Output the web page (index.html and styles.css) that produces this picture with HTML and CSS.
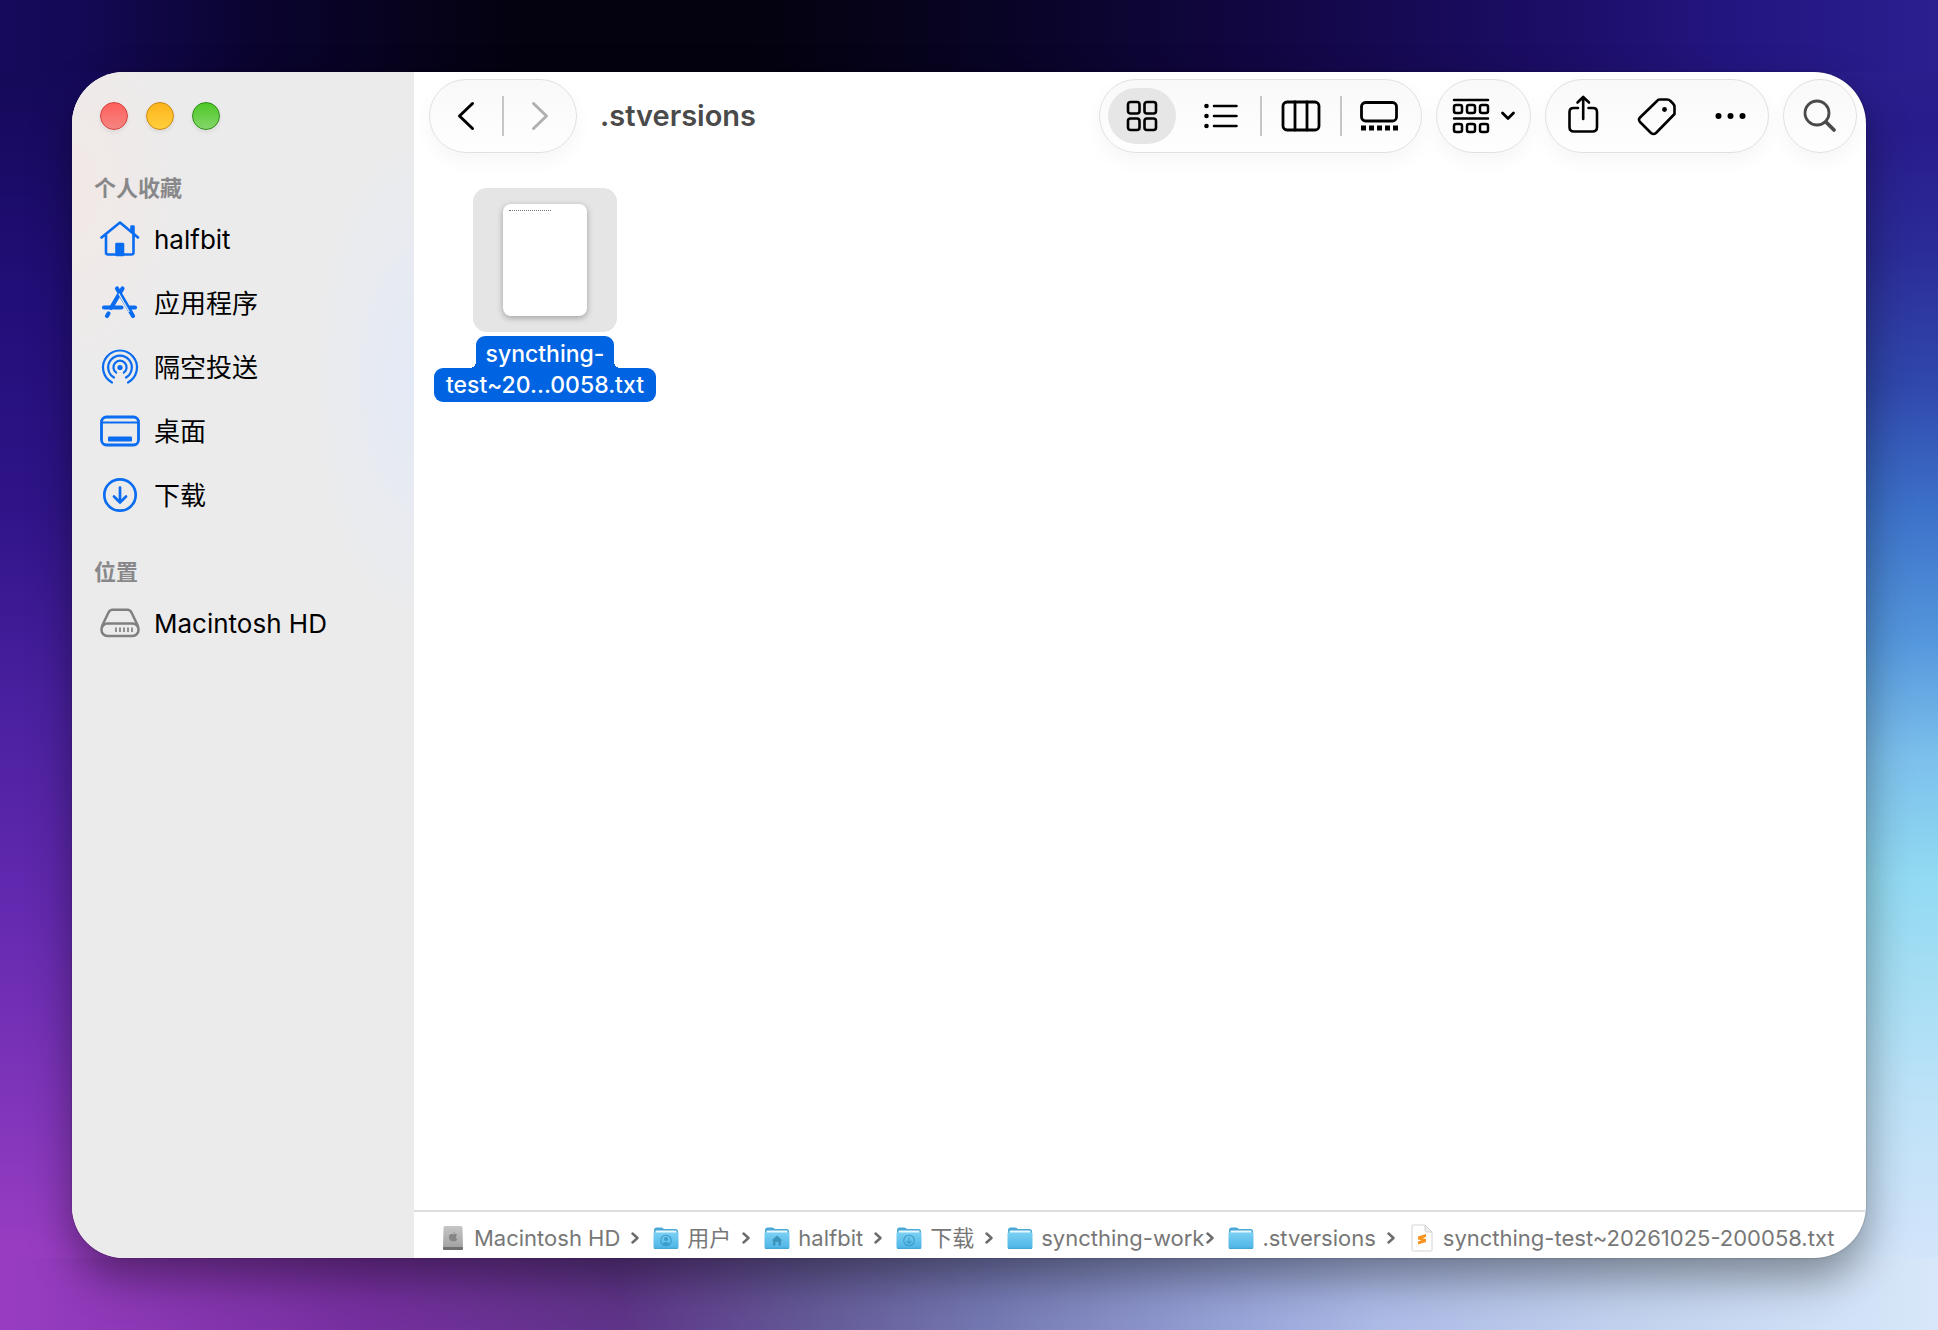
FILE: index.html
```html
<!DOCTYPE html>
<html lang="zh-CN">
<head>
<meta charset="utf-8">
<meta name="viewport" content="width=device-width, initial-scale=1">
<title>.stversions</title>
<link rel="stylesheet" href="styles.css">
</head>
<body>
<svg class="defs" aria-hidden="true">
  <defs>
    <linearGradient id="folder-front" x1="0" y1="0" x2="0" y2="1"><stop offset="0" stop-color="#7bd0f3"/><stop offset="1" stop-color="#4db4e6"/></linearGradient>
    <linearGradient id="drive-body" x1="0" y1="0" x2="0" y2="1"><stop offset="0" stop-color="#c6c6c6"/><stop offset="1" stop-color="#a2a2a2"/></linearGradient>
    <symbol id="folder" viewBox="0 0 26 24">
      <path d="M1 4.5Q1 1.5 3.5 1.5H8Q9.300 1.500 10.300 2.500Q11 3 12 3H22.500Q25 3 25 5.500V12H1Z" fill="#4aa9d6"/>
      <rect x="2.500" y="4.500" width="21" height="6" rx="1" fill="#e8f7fd"/>
      <path d="M.5 7.500Q.5 6.500 1.500 6.500H24.500Q25.500 6.500 25.500 7.500V21Q25.500 23 23.500 23H2.500Q.5 23 .5 21Z" fill="url(#folder-front)"/>
      <path d="M1 22.300H25" stroke="#45a3d0"/>
    </symbol>
    <symbol id="sep" viewBox="0 0 8 12"><path d="M1.500 1.500 6.500 6 1.500 10.500" fill="none" stroke="#6b6b6b" stroke-width="2.400" stroke-linecap="round" stroke-linejoin="round"/></symbol>
  </defs>
</svg>
<div class="window">
  <aside class="sidebar">
    <div class="lights">
      <button class="light red" aria-label="关闭"></button>
      <button class="light yellow" aria-label="最小化"></button>
      <button class="light green" aria-label="缩放"></button>
    </div>
    <nav>
      <h2>个人收藏</h2>
      <ul>
        <li><a href="#home">
          <svg width="40" height="36" viewBox="0 0 40 36" fill="none" stroke="#0a6cf0" stroke-width="2.600" stroke-linecap="round" stroke-linejoin="round"><path d="M1.500 16.500 20 1.500 38 16.500M6 14V31.500Q6 33.500 8 33.500H31.500Q33.500 33.500 33.500 31.500V14"/><path d="M31.500 10V5.500H33.500V12.500"/><path d="M16.500 34V23H23V34Z" fill="#0a6cf0"/></svg>
          <span>halfbit</span></a></li>
        <li><a href="#apps">
          <svg width="40" height="36" viewBox="0 0 40 36" fill="none" stroke="#0a6cf0" stroke-width="4.200" stroke-linecap="round"><path d="M17 3.500 33 31M22.500 3.500 11 23M4 22.500H21.500M29.500 22.500H35M8.500 28.500 7 31"/><path d="M19 9 29 26.500" stroke="#ebecec" stroke-width="1.300"/></svg>
          <span class="zh">应用程序</span></a></li>
        <li><a href="#airdrop">
          <svg width="40" height="36" viewBox="0 0 40 36" fill="none" stroke="#0a6cf0" stroke-width="2.200" stroke-linecap="round"><path d="M12 33.500A17 17 0 1 1 28 33.500M14 28.500A11.800 11.800 0 1 1 26 28.500M16.200 23.700A6.600 6.600 0 1 1 23.800 23.700"/><circle cx="20" cy="18.500" r="2.600" fill="#0a6cf0" stroke="none"/></svg>
          <span class="zh">隔空投送</span></a></li>
        <li><a href="#desktop">
          <svg width="40" height="36" viewBox="0 0 40 36" fill="none" stroke="#0a6cf0" stroke-width="2.800"><rect x="1.500" y="4" width="37" height="28" rx="5"/><path d="M2 9.500H38" stroke-width="2"/><rect x="8" y="23.500" width="24" height="5" rx="1" fill="#0a6cf0" stroke="none"/></svg>
          <span class="zh">桌面</span></a></li>
        <li><a href="#downloads">
          <svg width="40" height="36" viewBox="0 0 40 36" fill="none" stroke="#0a6cf0" stroke-width="2.700" stroke-linecap="round" stroke-linejoin="round"><circle cx="20" cy="18" r="15.700"/><path d="M20 10.500V25M14 19.500 20 25.500 26 19.500"/></svg>
          <span class="zh">下载</span></a></li>
      </ul>
      <h2>位置</h2>
      <ul>
        <li><a href="#hd">
          <svg width="40" height="36" viewBox="0 0 40 36" fill="none" stroke="#808082" stroke-width="2.500" stroke-linejoin="round"><path d="M2 21 8.500 7.500Q9.800 4.700 12.500 4.700H27.500Q30.200 4.700 31.500 7.500L38 21"/><rect x="1.500" y="18.500" width="37" height="12.500" rx="6"/><path d="M16 22.500V27M20 22.500V27M24 22.500V27M28 22.500V27M32 22.500V27" stroke-width="1.700"/></svg>
          <span>Macintosh HD</span></a></li>
      </ul>
    </nav>
  </aside>
  <main class="content">
    <header class="toolbar">
      <div class="pill nav-pill">
        <button class="tool" aria-label="后退"><svg width="18" height="30" viewBox="0 0 18 30"><path d="M15.500 2.500 2.500 15 15.500 27.500" stroke-width="3"/></svg></button>
        <i class="divider"></i>
        <button class="tool" aria-label="前进" disabled><svg width="18" height="30" viewBox="0 0 18 30"><path d="M2.500 2.500 15.500 15 2.500 27.500" stroke-width="3"/></svg></button>
      </div>
      <h1>.stversions</h1>
      <div class="pill view-pill">
        <button class="tool selected" aria-label="图标"><svg width="32" height="32" viewBox="0 0 32 32" stroke-width="2.600"><rect x="2" y="2" width="11.500" height="11.500" rx="2.500"/><rect x="18.500" y="2" width="11.500" height="11.500" rx="2.500"/><rect x="2" y="18.500" width="11.500" height="11.500" rx="2.500"/><rect x="18.500" y="18.500" width="11.500" height="11.500" rx="2.500"/></svg></button>
        <button class="tool" aria-label="列表"><svg width="34" height="26" viewBox="0 0 34 26" stroke-width="2.600"><path d="M10 3H32.500M10 13H32.500M10 23H32.500"/><g fill="#000" stroke="none"><circle cx="2.500" cy="3" r="2.300"/><circle cx="2.500" cy="13" r="2.300"/><circle cx="2.500" cy="23" r="2.300"/></g></svg></button>
        <i class="divider"></i>
        <button class="tool" aria-label="分栏"><svg width="40" height="32" viewBox="0 0 40 32" stroke-width="2.800"><rect x="2" y="2" width="36" height="28" rx="4"/><path d="M14 2V30M26 2V30"/></svg></button>
        <i class="divider"></i>
        <button class="tool last" aria-label="画廊"><svg width="40" height="32" viewBox="0 0 40 32" stroke-width="2.800"><rect x="2.500" y="2.500" width="35" height="18.500" rx="4"/><path d="M2 28H7M10 28H15M18 28H23M26 28H31M34 28H39" stroke-width="5" stroke-linecap="butt"/></svg></button>
      </div>
      <button class="pill group-pill" aria-label="分组">
        <svg width="38" height="36" viewBox="0 0 38 36" stroke-width="2.500"><path d="M2 2H36M2 20.500H36"/><rect x="2" y="7" width="8" height="8" rx="2"/><rect x="15" y="7" width="8" height="8" rx="2"/><rect x="28" y="7" width="8" height="8" rx="2"/><rect x="2" y="26" width="8" height="8" rx="2"/><rect x="15" y="26" width="8" height="8" rx="2"/><rect x="28" y="26" width="8" height="8" rx="2"/></svg>
        <svg width="16" height="10" viewBox="0 0 16 10" stroke-width="2.800"><path d="M2.500 2 8 7.500 13.500 2"/></svg>
      </button>
      <div class="pill action-pill">
        <button class="tool" aria-label="共享"><svg width="32" height="44" viewBox="0 0 32 44" stroke-width="2.600"><path d="M11 14H6.500Q2.500 14 2.500 18V33Q2.500 37.500 7 37.500H25.500Q30 37.500 30 33V18Q30 14 26 14H21.500M16.200 25V3M10.500 8.500 16.200 3 22 8.500"/></svg></button>
        <button class="tool" aria-label="标签"><svg width="40" height="40" viewBox="0 0 40 40" stroke-width="2.600"><path d="M22.500 3.500H30Q32 3.500 33.500 5L36 7.500Q37.500 9 37.500 11V18L19 37Q16.500 39 14 37L3 26Q1 23.500 3 21.500L20 5Q21 3.500 22.500 3.500Z"/><circle cx="27.500" cy="13.500" r="2.400" fill="#000" stroke="none"/></svg></button>
        <button class="tool" aria-label="更多"><svg width="32" height="8" viewBox="0 0 32 8"><g fill="#000" stroke="none"><circle cx="3.500" cy="4" r="3"/><circle cx="15.500" cy="4" r="3"/><circle cx="27.500" cy="4" r="3"/></g></svg></button>
      </div>
      <button class="pill search-pill" aria-label="搜索"><svg width="34" height="34" viewBox="0 0 34 34"><circle cx="14" cy="14" r="12" stroke="#4a4a4a" stroke-width="2.800"/><path d="M23 23 31 31" stroke="#4a4a4a" stroke-width="3.800"/></svg></button>
    </header>
    <section class="files">
      <a class="file" href="#file">
        <span class="thumb"><span class="page"><i class="scribble"></i></span></span>
        <span class="name"><span class="line first">syncthing-</span><span class="line second">test~20...0058.txt</span></span>
      </a>
    </section>
    <footer class="pathbar">
      <a class="crumb" href="#hd"><svg width="26" height="26" viewBox="-2 0 26 26"><path d="M1.500 2.500Q1.500 1 3 1H19Q20.500 1 20.500 2.500L21 23H1Z" fill="url(#drive-body)"/><rect x="1" y="22" width="20" height="3" rx="1" fill="#707070"/><path d="M11 8.500Q12 6.500 13 6.500 13 8 11 8.500M11 9.500C13 8.200 14.500 9 15 10 13.300 11 13.700 13.500 15.200 14 14.200 16.500 13 17 11.200 16 9 17 7.500 15.500 7 13 6.500 9.500 9 8.300 11 9.500Z" fill="#858585"/></svg><span>Macintosh HD</span></a>
      <svg class="sep"><use href="#sep"/></svg>
      <a class="crumb" href="#users"><svg width="26" height="24" viewBox="0 0 26 24"><use href="#folder"/><g fill="none" stroke="#3c9cc8" stroke-width="1.100"><circle cx="13" cy="14.500" r="5.300"/></g><circle cx="13" cy="13" r="2" fill="#3c9cc8"/><path d="M9.500 17.500Q13 14.500 16.500 17.500 13 21 9.500 17.500Z" fill="#3c9cc8"/></svg><span>用户</span></a>
      <svg class="sep"><use href="#sep"/></svg>
      <a class="crumb" href="#home"><svg width="26" height="24" viewBox="0 0 26 24"><use href="#folder"/><path d="M7.500 14.500 13 9.500 18.500 14.500H17V19.500H14.500V16H11.500V19.500H9V14.500Z" fill="#3c94bd"/></svg><span>halfbit</span></a>
      <svg class="sep"><use href="#sep"/></svg>
      <a class="crumb" href="#downloads"><svg width="26" height="24" viewBox="0 0 26 24"><use href="#folder"/><g fill="none" stroke="#3c9cc8" stroke-width="1.100"><circle cx="13" cy="14.500" r="5.300"/><path d="M13 11.500V17.500M10.500 15 13 17.500 15.500 15"/></g></svg><span>下载</span></a>
      <svg class="sep"><use href="#sep"/></svg>
      <a class="crumb cut" href="#work"><svg width="26" height="24" viewBox="0 0 26 24"><use href="#folder"/></svg><span>syncthing-work</span></a>
      <svg class="sep"><use href="#sep"/></svg>
      <a class="crumb" href="#versions"><svg width="26" height="24" viewBox="0 0 26 24"><use href="#folder"/></svg><span>.stversions</span></a>
      <svg class="sep"><use href="#sep"/></svg>
      <a class="crumb" href="#file"><svg width="26" height="28" viewBox="-2 0 26 28"><path d="M1 2Q1 1 2 1H14L21 8V26Q21 27 20 27H2Q1 27 1 26Z" fill="#fff" stroke="#d5d5d5"/><path d="M14 1V6.500Q14 8 15.500 8H21Z" fill="#eee" stroke="#d0d0d0"/><path d="M7 12.500 15 10V13L11.500 14.200 15 15V18L7 20.500V17.500L10.500 16.300 7 15.500Z" fill="#f7931e"/></svg><span>syncthing-test~20261025-200058.txt</span></a>
    </footer>
  </main>
</div>
</body>
</html>
```
FILE: styles.css
```css
* { box-sizing: border-box; }

body {
  margin: 0;
  min-height: 100vh;
  padding: 72px;
  display: flex;
  font-family: Inter, "Noto Sans CJK SC", sans-serif;
  color: #000;
  background-color: #2d1282;
  background-image:
    linear-gradient(90deg, #150a5c 0%, #140956 4%, #0a0430 13%, #04020f 27%, #04020f 39%, #080424 51%, #110640 64%, #1c0d66 80%, #231682 90%, #2a1f8f 100%),
    linear-gradient(90deg, #983dc2 0%, #8c38b6 7%, #752f9e 19%, #5e3488 32%, #645a98 42%, #7478b2 51%, #98a4d8 64%, #acbae6 71%, #c2d2ee 84%, #d8e8fa 100%),
    linear-gradient(180deg, #150a5c 0%, #140958 5%, #220e78 22%, #2f1488 38%, #4a20a0 53%, #6329b0 68%, #8035ba 83%, #983dc2 94%),
    linear-gradient(180deg, #2a208c 0%, #281c8c 10%, #2b2c98 19%, #3048ac 29%, #3c70c8 38%, #5496dc 48%, #7cc0ec 57%, #92daf2 66%, #a6def4 74%, #bee2f8 83%, #d0e4fa 93%, #d8e8fa 100%);
  background-repeat: no-repeat;
  background-position: left top, left bottom, left top, right top;
  background-size: 100% 72px, 100% 72px, 50% 100%, 50% 100%;
}

.defs { position: absolute; width: 0; height: 0; }

a { color: inherit; text-decoration: none; }
button { font: inherit; border: 0; padding: 0; background: none; }
svg { flex: none; display: block; }

.window {
  flex: 1;
  display: flex;
  min-width: 0;
  border-radius: 52px;
  overflow: hidden;
  background: #fff;
  box-shadow: 0 20px 44px rgba(0, 0, 0, .4), 0 0 2px rgba(0, 0, 0, .3);
}

/* Sidebar */
.sidebar {
  flex: none;
  width: 342px;
  padding: 30px 22px;
  background:
    radial-gradient(ellipse 100px 240px at 100% 26%, #e4eaf6, transparent),
    radial-gradient(ellipse 120px 200px at 0 10%, #f2e9e6, transparent),
    #ebebec;
}
.lights { display: flex; gap: 18px; padding-left: 6px; }
.light {
  width: 28px;
  height: 28px;
  border-radius: 50%;
  border: 1px solid;
  box-shadow: 0 2px 4px rgba(0, 0, 0, .08);
}
.red { background: linear-gradient(#ff605c, #f58580); border-color: #d0423f; }
.yellow { background: linear-gradient(#fdb41c, #ffcf3c); border-color: #c98712; }
.green { background: linear-gradient(#4dc926, #84d66a); border-color: #2c8a14; }

.sidebar h2 {
  margin: 42px 0 3px;
  font-size: 22px;
  line-height: 32px;
  font-weight: 700;
  color: #88888a;
}
.sidebar ul { list-style: none; margin: 0; padding: 0; }
.sidebar ul + h2 { margin-top: 29px; }
.sidebar a {
  display: flex;
  align-items: center;
  gap: 14px;
  height: 64px;
  padding-left: 6px;
  font-size: 26px;
  font-weight: 400;
}
.sidebar .zh { padding-bottom: 4px; }

/* Toolbar */
.content { flex: 1; min-width: 0; display: flex; flex-direction: column; }
.toolbar {
  display: flex;
  align-items: center;
  gap: 14px;
  padding: 7px 9px 7px 15px;
}
.toolbar h1 {
  flex: 1;
  margin: 0 0 0 9px;
  font-size: 29px;
  line-height: 40px;
  font-weight: 600;
  color: #4a4a4a;
}
.toolbar svg { fill: none; stroke: #000; stroke-linecap: round; stroke-linejoin: round; }
.pill {
  flex: none;
  display: flex;
  align-items: center;
  height: 74px;
  border: 1px solid #e0e0e0;
  border-radius: 37px;
  background: linear-gradient(#f9f9f9, #fefefe);
  box-shadow: 0 8px 20px rgba(0, 0, 0, .04);
}
.tool {
  height: 56px;
  flex: 1;
  display: flex;
  align-items: center;
  justify-content: center;
}
.divider { flex: none; width: 2px; height: 40px; background: #c6c6c6; }
.nav-pill { width: 148px; }
.tool:disabled svg { stroke: #b0b0b0; }
.view-pill { width: 323px; padding: 0 5px 0 8px; }
.selected { flex: none; width: 68px; margin-right: 6px; border-radius: 28px; background: #e6e6e6; }
.last { flex: none; width: 74px; }
.group-pill { width: 95px; justify-content: center; gap: 10px; }
.action-pill { width: 224px; }
.search-pill { width: 74px; justify-content: center; }

/* Files */
.files { flex: 1; padding: 28px 20px; display: flex; align-items: flex-start; }
.file { display: flex; flex-direction: column; align-items: center; gap: 4px; width: 222px; }
.thumb {
  width: 144px;
  height: 144px;
  display: flex;
  align-items: center;
  justify-content: center;
  border-radius: 14px;
  background: #e5e5e5;
}
.page {
  width: 84px;
  height: 112px;
  padding: 6px;
  border-radius: 8px;
  background: #fff;
  box-shadow: 0 2px 6px rgba(0, 0, 0, .3);
}
.scribble { display: block; width: 42px; border-top: 1px dotted #777; }
.name {
  display: flex;
  flex-direction: column;
  align-items: center;
  width: 100%;
  font-size: 23px;
  line-height: 34px;
  font-weight: 500;
  color: #fff;
  text-align: center;
}
.line { background: #0063e1; white-space: nowrap; }
.first { position: relative; width: 138px; height: 32px; padding-top: 1px; border-radius: 9px 9px 0 0; }
.first::before,
.first::after {
  content: "";
  position: absolute;
  bottom: 0;
  width: 6px;
  height: 6px;
}
.first::before { right: 100%; background: radial-gradient(circle at 0 0, transparent 6px, #0063e1 6px); }
.first::after { left: 100%; background: radial-gradient(circle at 100% 0, transparent 6px, #0063e1 6px); }
.second { width: 100%; border-radius: 9px; }

/* Path bar */
.pathbar {
  display: flex;
  align-items: center;
  height: 48px;
  padding: 6px 22px 0 26px;
  border-top: 2px solid #dedede;
  font-size: 22px;
  line-height: 30px;
  color: #777;
}
.crumb { display: flex; align-items: center; gap: 8px; white-space: nowrap; }
.sep { flex: none; width: 8px; height: 12px; margin: 0 14px 0 11px; }
.cut + .sep { margin-left: 2px; }
```
